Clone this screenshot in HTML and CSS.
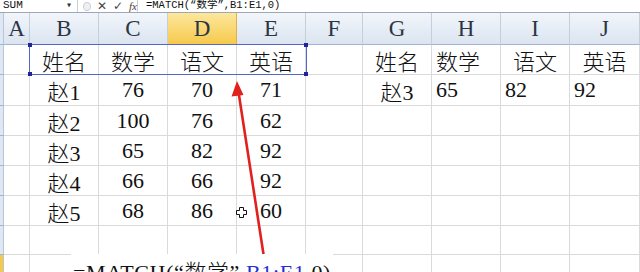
FILE: index.html
```html
<!DOCTYPE html>
<html lang="zh">
<head>
    <meta charset="UTF-8">
    <meta name="viewport" content="width=device-width, initial-scale=1.0">
    <title>MATCH</title>
    <link rel="stylesheet" href="styles.css">
</head>
<body>
    <!-- Строка формул -->
    <div class="formula-bar">
        <div class="name-box"><span>SUM</span><span class="drop">▾</span></div>
        <div class="fx-tools">
            <span class="dot"></span>
            <span class="tool">✕</span>
            <span class="tool">✓</span>
            <span class="tool fx">fx</span>
        </div>
        <div class="formula-input">=MATCH(“数学”,B1:E1,0)</div>
    </div>

    <!-- Лист -->
    <div class="sheet">
        <div class="corner"></div>
        <div class="col-head">A</div>
        <div class="col-head">B</div>
        <div class="col-head">C</div>
        <div class="col-head active">D</div>
        <div class="col-head">E</div>
        <div class="col-head">F</div>
        <div class="col-head">G</div>
        <div class="col-head">H</div>
        <div class="col-head">I</div>
        <div class="col-head">J</div>

        <div class="row-head"></div>
        <div class="cell"></div>
        <div class="cell">姓名</div>
        <div class="cell">数学</div>
        <div class="cell">语文</div>
        <div class="cell">英语</div>
        <div class="cell"></div>
        <div class="cell">姓名</div>
        <div class="cell left">数学</div>
        <div class="cell">语文</div>
        <div class="cell">英语</div>

        <div class="row-head"></div>
        <div class="cell"></div>
        <div class="cell">赵1</div>
        <div class="cell">76</div>
        <div class="cell">70</div>
        <div class="cell">71</div>
        <div class="cell"></div>
        <div class="cell">赵3</div>
        <div class="cell left">65</div>
        <div class="cell left">82</div>
        <div class="cell left">92</div>

        <div class="row-head"></div>
        <div class="cell"></div>
        <div class="cell">赵2</div>
        <div class="cell">100</div>
        <div class="cell">76</div>
        <div class="cell">62</div>
        <div class="cell"></div>
        <div class="cell"></div>
        <div class="cell"></div>
        <div class="cell"></div>
        <div class="cell"></div>

        <div class="row-head"></div>
        <div class="cell"></div>
        <div class="cell">赵3</div>
        <div class="cell">65</div>
        <div class="cell">82</div>
        <div class="cell">92</div>
        <div class="cell"></div>
        <div class="cell"></div>
        <div class="cell"></div>
        <div class="cell"></div>
        <div class="cell"></div>

        <div class="row-head"></div>
        <div class="cell"></div>
        <div class="cell">赵4</div>
        <div class="cell">66</div>
        <div class="cell">66</div>
        <div class="cell">92</div>
        <div class="cell"></div>
        <div class="cell"></div>
        <div class="cell"></div>
        <div class="cell"></div>
        <div class="cell"></div>

        <div class="row-head"></div>
        <div class="cell"></div>
        <div class="cell">赵5</div>
        <div class="cell">68</div>
        <div class="cell">86</div>
        <div class="cell">60</div>
        <div class="cell"></div>
        <div class="cell"></div>
        <div class="cell"></div>
        <div class="cell"></div>
        <div class="cell"></div>

        <div class="row-head"></div>
        <div class="cell"></div>
        <div class="cell"></div>
        <div class="cell"></div>
        <div class="cell"></div>
        <div class="cell"></div>
        <div class="cell"></div>
        <div class="cell"></div>
        <div class="cell"></div>
        <div class="cell"></div>
        <div class="cell"></div>

        <div class="row-head active"></div>
        <div class="cell"></div>
        <div class="cell"></div>
        <div class="cell"></div>
        <div class="cell editing"><span class="edit-text">=MATCH(“数学”,<span class="ref">B1:E1</span>,0)</span></div>
        <div class="cell"></div>
        <div class="cell"></div>
        <div class="cell"></div>
        <div class="cell"></div>
        <div class="cell"></div>
        <div class="cell"></div>

        <!-- Выделение B1:E1 -->
        <div class="selection">
            <span class="handle tl"></span>
            <span class="handle tr"></span>
            <span class="handle bl"></span>
            <span class="handle br"></span>
        </div>

        <!-- Курсор -->
        <svg class="cursor" width="11" height="11" viewBox="0 0 11 11">
            <path d="M3.5 0.5h4v3h3v4h-3v3h-4v-3h-3v-4h3z" fill="#fff" stroke="#111" stroke-width="1"/>
        </svg>
    </div>

    <!-- Стрелка -->
    <svg class="arrow" width="640" height="272" viewBox="0 0 640 272">
        <line x1="265" y1="264" x2="238.5" y2="92" stroke="#e0211d" stroke-width="2.6" stroke-linecap="round"/>
        <polygon points="237,81 243.5,95 231.5,96.5" fill="#e0211d"/>
    </svg>
</body>
</html>
```

FILE: styles.css
```css
/* Основные стили */
body {
    margin: 0;
    width: 640px;
    height: 272px;
    overflow: hidden;
    position: relative;
    background: #fff;
    font-family: 'Liberation Serif', 'Noto Sans CJK SC', serif;
    color: #111;
}

/* Строка формул */
.formula-bar {
    display: flex;
    height: 12px;
    border-bottom: 1px solid #9ea8b4;
    font-family: 'Liberation Mono', 'Noto Sans CJK SC', monospace;
    font-size: 10px;
    line-height: 11px;
    color: #111;
    background: #fff;
}

.name-box {
    width: 78px;
    display: flex;
    justify-content: space-between;
    padding: 0 5px 0 3px;
    box-sizing: border-box;
    border-right: 1px solid #c9ced6;
    font-size: 11px;
}

.name-box .drop {
    font-size: 10px;
    color: #333;
}

.fx-tools {
    width: 60px;
    display: flex;
    align-items: center;
    gap: 6px;
    padding-left: 5px;
    box-sizing: border-box;
    border-right: 1px solid #c9ced6;
    color: #444;
}

.fx-tools .dot {
    width: 7px;
    height: 7px;
    border-radius: 50%;
    border: 1px solid #c9ced6;
    background: #eef0f3;
}

.fx-tools .tool {
    font-family: 'DejaVu Sans', sans-serif;
    font-size: 12px;
    line-height: 11px;
}

.fx-tools .fx {
    font-family: 'Liberation Serif', serif;
    font-style: italic;
    font-size: 11px;
}

.formula-input {
    padding-left: 8px;
    white-space: nowrap;
    font-size: 10.5px;
}

/* Лист */
.sheet {
    position: relative;
    display: grid;
    grid-template-columns: 4px 26px 69px 69px 69px 69px 57px 69px 69px 69px 70px;
    grid-template-rows: 32px 30px 31px 30px 30px 30px 30px 29px 30px;
    font-size: 22px;
}

.corner,
.row-head {
    background: #dfe7f2;
    border-right: 1px solid #b7c6d9;
    border-bottom: 1px solid #9eb6ce;
    box-sizing: border-box;
}

.row-head.active {
    background: #f5c94a;
    border-bottom-color: #e2a932;
}

.col-head {
    display: flex;
    align-items: center;
    justify-content: center;
    background: linear-gradient(#f2f6fb, #dbe4f0);
    border-right: 1px solid #c4cfdd;
    border-bottom: 1px solid #9eb6ce;
    box-sizing: border-box;
    color: #2c3543;
    font-size: 23px;
}

.col-head.active {
    background: linear-gradient(#fde79c, #f6c94c);
    border-right-color: #e2b04a;
    border-bottom-color: #e2a932;
}

.cell {
    display: flex;
    align-items: center;
    justify-content: center;
    border-right: 1px solid #dadada;
    border-bottom: 1px solid #dadada;
    box-sizing: border-box;
    white-space: nowrap;
    font-weight: 300;
}

.cell.left {
    justify-content: flex-start;
    padding-left: 4px;
}

/* Редактируемая ячейка D8 */
.cell.editing {
    overflow: visible;
    border-top: 2px solid #111;
    margin-top: -1px;
}

.edit-text {
    position: relative;
    z-index: 1;
    background: #fff;
    padding: 0 2px;
    letter-spacing: 0.6px;
}

.edit-text .ref {
    color: #1f2fd0;
}

/* Выделение диапазона */
.selection {
    position: absolute;
    left: 29px;
    top: 31px;
    width: 278px;
    height: 31px;
    border: 1px solid #5566c4;
    box-sizing: border-box;
    pointer-events: none;
}

.handle {
    position: absolute;
    width: 4px;
    height: 4px;
    background: #1f2599;
}

.handle.tl { left: -2px; top: -2px; }
.handle.tr { right: -2px; top: -2px; }
.handle.bl { left: -2px; bottom: -2px; }
.handle.br { right: -2px; bottom: -2px; }

.cursor {
    position: absolute;
    left: 236px;
    top: 194px;
}

.arrow {
    position: absolute;
    left: 0;
    top: 0;
    pointer-events: none;
}
```
